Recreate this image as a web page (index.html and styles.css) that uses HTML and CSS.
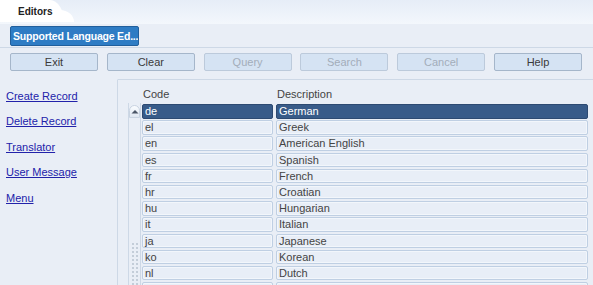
FILE: index.html
```html
<!DOCTYPE html>
<html lang="en">
<head>
    <meta charset="UTF-8">
    <meta name="viewport" content="width=device-width, initial-scale=1.0">
    <title>Editors</title>
    <link rel="stylesheet" href="styles.css">
</head>
<body>
    <div class="tab-bar">
        <div class="tab">Editors</div>
    </div>

    <div class="title-row">
        <button class="title-btn">Supported Language Ed...</button>
    </div>

    <div class="toolbar">
        <button class="btn">Exit</button>
        <button class="btn">Clear</button>
        <button class="btn" disabled>Query</button>
        <button class="btn" disabled>Search</button>
        <button class="btn" disabled>Cancel</button>
        <button class="btn">Help</button>
    </div>

    <div class="content">
        <nav class="side-menu">
            <a href="#">Create Record</a>
            <a href="#">Delete Record</a>
            <a href="#">Translator</a>
            <a href="#">User Message</a>
            <a href="#">Menu</a>
        </nav>

        <div class="main-panel">
            <div class="grid-head">
                <span class="head-code">Code</span>
                <span class="head-desc">Description</span>
            </div>
            <div class="grid-body">
                <div class="scroll-col">
                    <div class="scroll-up">
                        <svg width="8" height="5" viewBox="0 0 8 5"><path d="M0.5 4.5 L4 1 L7.5 4.5 Z" fill="#4a5566"/></svg>
                    </div>
                    <div class="grip"></div>
                </div>
                <div class="rows">
                    <div class="row selected"><div class="cell code">de</div><div class="cell desc">German</div></div>
                    <div class="row"><div class="cell code">el</div><div class="cell desc">Greek</div></div>
                    <div class="row"><div class="cell code">en</div><div class="cell desc">American English</div></div>
                    <div class="row"><div class="cell code">es</div><div class="cell desc">Spanish</div></div>
                    <div class="row"><div class="cell code">fr</div><div class="cell desc">French</div></div>
                    <div class="row"><div class="cell code">hr</div><div class="cell desc">Croatian</div></div>
                    <div class="row"><div class="cell code">hu</div><div class="cell desc">Hungarian</div></div>
                    <div class="row"><div class="cell code">it</div><div class="cell desc">Italian</div></div>
                    <div class="row"><div class="cell code">ja</div><div class="cell desc">Japanese</div></div>
                    <div class="row"><div class="cell code">ko</div><div class="cell desc">Korean</div></div>
                    <div class="row"><div class="cell code">nl</div><div class="cell desc">Dutch</div></div>
                    <div class="row"><div class="cell code"></div><div class="cell desc"></div></div>
                </div>
            </div>
        </div>
    </div>
</body>
</html>
```

FILE: styles.css
```css
:root {
    --page-bg: #e9eef6;
    --line: #cdd8e6;
    --cell-bg: #e8eef7;
    --cell-border: #bfcfe3;
    --btn-bg: #d5e3f3;
    --btn-border: #a5b6ca;
    --text: #3a3a3a;
    --link: #2222aa;
}

* {
    margin: 0;
    padding: 0;
    box-sizing: border-box;
}

body {
    width: 593px;
    height: 285px;
    overflow: hidden;
    background: var(--page-bg);
    font-family: "Liberation Sans", Arial, sans-serif;
    font-size: 11px;
    color: var(--text);
}

.tab-bar {
    height: 24px;
    background: linear-gradient(#e6edf7, #f3f7fc);
}

.tab {
    width: 64px;
    height: 22px;
    background: #fff;
    border-top-right-radius: 14px 22px;
    padding: 6px 0 0 18px;
    font-size: 10px;
    font-weight: bold;
    color: #222;
    position: relative;
}

.tab::after {
    content: "";
    position: absolute;
    right: -10px;
    bottom: 0;
    width: 14px;
    height: 12px;
    background: #fff;
    border-top-right-radius: 14px 12px;
}

.title-row {
    height: 24px;
    padding: 2px 0 0 10px;
    border-bottom: 1px solid var(--line);
}

.title-btn {
    width: 129px;
    height: 20px;
    background: #2e7cc4;
    border: 1px solid #215f9c;
    border-radius: 2px;
    color: #fff;
    font-family: inherit;
    font-size: 10.5px;
    font-weight: bold;
    letter-spacing: -0.2px;
    text-align: left;
    padding-left: 2px;
    white-space: nowrap;
    overflow: hidden;
}

.toolbar {
    display: flex;
    gap: 8.8px;
    padding: 5px 0 0 10px;
    height: 31px;
}

.btn {
    width: 88px;
    height: 18px;
    background: var(--btn-bg);
    border: 1px solid var(--btn-border);
    border-radius: 2px;
    font-family: inherit;
    font-size: 11px;
    color: #3a3a3a;
}

.btn:disabled {
    color: #a3adba;
    border-color: #bccadb;
}

.content {
    display: flex;
    height: 206px;
    overflow: hidden;
}

.side-menu {
    width: 118px;
    border-right: 1px solid var(--line);
    border-top: 1px solid var(--page-bg);
    display: flex;
    flex-direction: column;
    gap: 11.4px;
    padding: 9px 0 0 6px;
}

.side-menu a {
    color: var(--link);
    text-decoration: underline;
    font-size: 11px;
    line-height: 14px;
}

.main-panel {
    flex: 1;
    border-top: 1px solid var(--line);
    padding-left: 10px;
}

.grid-head {
    display: flex;
    height: 23px;
    padding-top: 8px;
    color: #444;
}

.head-code {
    margin-left: 15px;
    width: 134px;
}

.grid-body {
    display: flex;
}

.scroll-col {
    width: 13px;
    border-left: 1px solid var(--line);
    border-right: 1px solid var(--line);
    display: flex;
    flex-direction: column;
    align-items: center;
}

.scroll-up {
    width: 11px;
    height: 13px;
    margin-top: 2px;
    border-radius: 6px 6px 0 0;
    background: linear-gradient(#fafcff, #dfe7f1);
    border: 1px solid #c9d4e2;
    display: flex;
    justify-content: center;
    padding-top: 3px;
}

.grip {
    margin-top: 124px;
    width: 8px;
    height: 60px;
    background-image: radial-gradient(circle, #c3ccd8 0.7px, transparent 1px);
    background-size: 4px 4px;
}

.rows {
    display: flex;
    flex-direction: column;
    margin-left: 1px;
}

.row {
    display: flex;
    gap: 3px;
    height: 16.2px;
    padding-top: 1px;
}

.cell {
    height: 14.5px;
    background: var(--cell-bg);
    border: 1px solid var(--cell-border);
    border-radius: 2px;
    box-shadow: inset 0 0 0 1px #f2f6fb;
    padding-left: 2px;
    line-height: 12px;
    color: #444;
    white-space: nowrap;
}

.code {
    width: 131px;
}

.desc {
    width: 312px;
}

.selected .cell {
    background: #385b89;
    border-color: #2d4a72;
    box-shadow: none;
    color: #fff;
}
```
